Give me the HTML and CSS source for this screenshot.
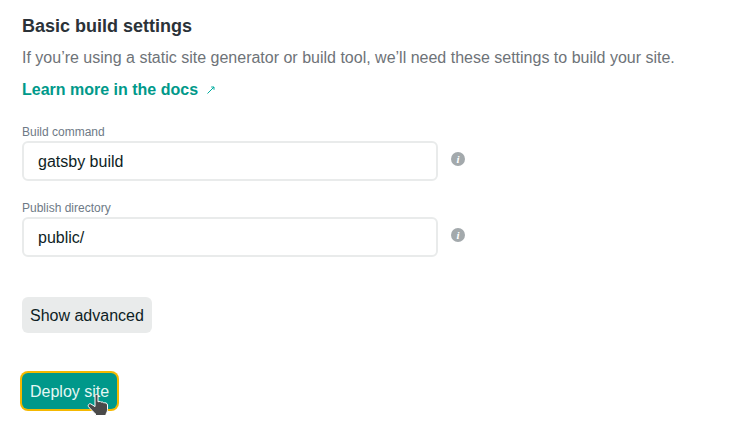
FILE: index.html
```html
<!DOCTYPE html>
<html lang="en">
  <head>
    <meta charset="UTF-8" />
    <title>Basic build settings</title>
    <link rel="stylesheet" href="styles.css">
  </head>
  <body>
    <h2 class="title">Basic build settings</h2>
    <p class="lead">If you’re using a static site generator or build tool, we’ll need these settings to build your site.</p>
    <a class="docs-link" href="#">Learn more in the docs
      <svg class="docs-arrow" width="10" height="10" viewBox="0 0 10 10">
        <path d="M1.5 8.5 L8 2 M5.2 2 H8 V4.8" fill="none" stroke="#00ad9f" stroke-width="1" />
      </svg>
    </a>

    <div class="field first">
      <label class="field-label">Build command</label>
      <div class="field-row">
        <div class="text-input">gatsby build</div>
        <span class="info"><i>i</i></span>
      </div>
    </div>

    <div class="field">
      <label class="field-label">Publish directory</label>
      <div class="field-row">
        <div class="text-input">public/</div>
        <span class="info"><i>i</i></span>
      </div>
    </div>

    <button class="btn btn-plain">Show advanced</button>

    <div class="deploy-wrap">
      <button class="btn btn-deploy">Deploy site</button>
      <svg class="cursor" width="22" height="24" viewBox="0 0 22 24">
        <path d="M8 2.5 C8 1 11 1 11 2.5 V8.8 C12.4 8.2 13.6 8.4 14 9.2 C15 8.7 16.2 8.9 16.6 9.9 C18 9.4 20.5 10 20.5 12 V16.5 C20.5 18.5 19.8 19.8 19 21 V22.5 H8.5 V21 C6.8 19.2 4 16.6 1.6 13.8 C0.4 12.2 2.2 10 4 11 L8 13.6 Z" fill="#4a4a4a" stroke="#fff" stroke-width="1" />
      </svg>
    </div>
  </body>
</html>
```

FILE: styles.css
```css
body {
  margin: 0;
  padding: 14px 22px 0;
  min-height: 413px;
  background: #fff;
  font-family: "Liberation Sans", Arial, sans-serif;
}

.title {
  margin: 0;
  font-size: 18px;
  line-height: 24px;
  font-weight: 700;
  color: #2b3238;
}

.lead {
  margin: 8px 0 0;
  font-size: 16px;
  line-height: 24px;
  color: #6e7378;
}

.docs-link {
  display: block;
  margin-top: 8px;
  font-size: 16px;
  line-height: 24px;
  font-weight: 700;
  color: #00998a;
  text-decoration: none;
}

.docs-arrow {
  margin-left: 4px;
}

.field {
  margin-top: 20px;
}

.field.first {
  margin-top: 23px;
}

.field-label {
  display: block;
  font-size: 12px;
  line-height: 14px;
  color: #6e7a86;
  margin-bottom: 2px;
}

.field-row {
  display: flex;
  align-items: center;
  gap: 13px;
}

.text-input {
  box-sizing: border-box;
  width: 416px;
  height: 40px;
  padding: 1px 0 0 14px;
  border: 2px solid #e9ebeb;
  border-radius: 6px;
  font-size: 16px;
  line-height: 36px;
  color: #0e1e25;
}

.info {
  display: flex;
  align-items: center;
  justify-content: center;
  width: 14px;
  height: 14px;
  margin-top: -5px;
  border-radius: 50%;
  background: #a3a9ac;
  color: #fff;
}

.info i {
  font-family: "Liberation Serif", serif;
  font-size: 11px;
  font-weight: 700;
  line-height: 14px;
}

.btn {
  display: block;
  box-sizing: border-box;
  height: 36px;
  border: 0;
  font-family: inherit;
  font-size: 16px;
  line-height: 20px;
  padding: 9px 8px 7px;
  white-space: nowrap;
}

.btn-plain {
  margin-top: 40px;
  border-radius: 6px;
  background: #e9ebeb;
  color: #0e1e25;
}

.deploy-wrap {
  position: relative;
  width: 95px;
  margin-top: 40px;
}

.btn-deploy {
  border-radius: 6px;
  background: #00988a;
  color: #e6f7f4;
  box-shadow: 0 0 0 2px #f5b800;
}

.cursor {
  position: absolute;
  left: 65px;
  top: 20px;
}
```
